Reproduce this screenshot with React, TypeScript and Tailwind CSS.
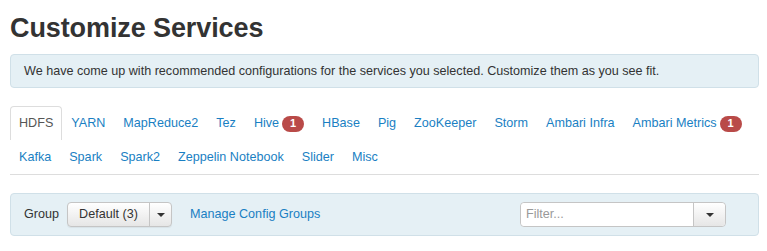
import { useState } from "react";

const font = { fontFamily: '"Liberation Sans", Arial, sans-serif' };

type Tab = { name: string; badge?: number };

const rowOne: Tab[] = [
  { name: "HDFS" },
  { name: "YARN" },
  { name: "MapReduce2" },
  { name: "Tez" },
  { name: "Hive", badge: 1 },
  { name: "HBase" },
  { name: "Pig" },
  { name: "ZooKeeper" },
  { name: "Storm" },
  { name: "Ambari Infra" },
  { name: "Ambari Metrics", badge: 1 },
];

const rowTwo: Tab[] = [
  { name: "Kafka" },
  { name: "Spark" },
  { name: "Spark2" },
  { name: "Zeppelin Notebook" },
  { name: "Slider" },
  { name: "Misc" },
];

const Caret = () => (
  <span className="inline-block h-0 w-0 border-x-[4px] border-t-[4px] border-x-transparent border-t-[#333]" />
);

const TabItem = ({ tab, active, onClick }: { tab: Tab; active: boolean; onClick: () => void }) => (
  <li
    onClick={onClick}
    className={
      active
        ? "flex h-[34px] shrink-0 cursor-pointer items-center whitespace-nowrap rounded-t-[4px] border border-b-0 border-[#ddd] bg-white px-[8px] text-[#555]"
        : "flex h-[34px] shrink-0 cursor-pointer items-center whitespace-nowrap border border-b-0 border-transparent px-[8px] text-[#1a7fc3]"
    }
  >
    {tab.name}
    {tab.badge ? (
      <span className="ml-[3px] flex h-[16px] min-w-[22px] items-center justify-center rounded-full bg-[#b94a48] px-[7px] text-[11px] font-bold leading-none text-white">
        {tab.badge}
      </span>
    ) : null}
  </li>
);

export default function App() {
  const [active, setActive] = useState("HDFS");

  return (
    <div className="min-h-[251px] bg-white px-[10px] pr-[8px] text-[#333]" style={font}>
      <h2 className="pt-[13px] text-[27px] font-bold leading-[30px] tracking-[-0.1px]">Customize Services</h2>

      <div className="mt-[11px] flex h-[34px] items-center whitespace-nowrap rounded-[4px] border border-[#d0e0e8] bg-[#e5f0f5] px-[13px] text-[12.6px]">
        We have come up with recommended configurations for the services you selected. Customize them as you see fit.
      </div>

      <div className="mt-[18px] border-b border-[#ddd] text-[12.6px]">
        <ul className="flex">
          {rowOne.map((t) => (
            <TabItem key={t.name} tab={t} active={active === t.name} onClick={() => setActive(t.name)} />
          ))}
        </ul>
        <ul className="flex">
          {rowTwo.map((t) => (
            <TabItem key={t.name} tab={t} active={active === t.name} onClick={() => setActive(t.name)} />
          ))}
        </ul>
      </div>

      <div className="mt-[18px] flex h-[43px] items-center rounded-[4px] border border-[#d0e0e8] bg-[#e5f0f5] pl-[13px] pr-[32px] text-[12.6px]">
        <span>Group</span>
        <div className="ml-[8px] flex h-[25px] rounded-[4px] border border-[#c5c5c5] bg-gradient-to-b from-white to-[#e6e6e6] shadow-[0_1px_1px_rgba(0,0,0,0.06)]">
          <button className="w-[81px] text-[12.6px] text-[#333]">Default (3)</button>
          <button className="flex w-[22px] items-center justify-center border-l border-[#c5c5c5]">
            <Caret />
          </button>
        </div>
        <a className="ml-[18px] cursor-pointer whitespace-nowrap text-[#1a7fc3]">Manage Config Groups</a>

        <div className="ml-auto flex h-[25px] w-[206px] rounded-[4px] border border-[#c5c5c5] bg-white">
          <input
            placeholder="Filter..."
            className="min-w-0 flex-1 rounded-l-[4px] bg-white px-[5px] text-[12.6px] text-[#333] outline-none placeholder:text-[#999]"
            style={font}
          />
          <button className="flex w-[32px] items-center justify-center rounded-r-[4px] border-l border-[#c5c5c5] bg-gradient-to-b from-white to-[#e6e6e6]">
            <Caret />
          </button>
        </div>
      </div>
    </div>
  );
}
